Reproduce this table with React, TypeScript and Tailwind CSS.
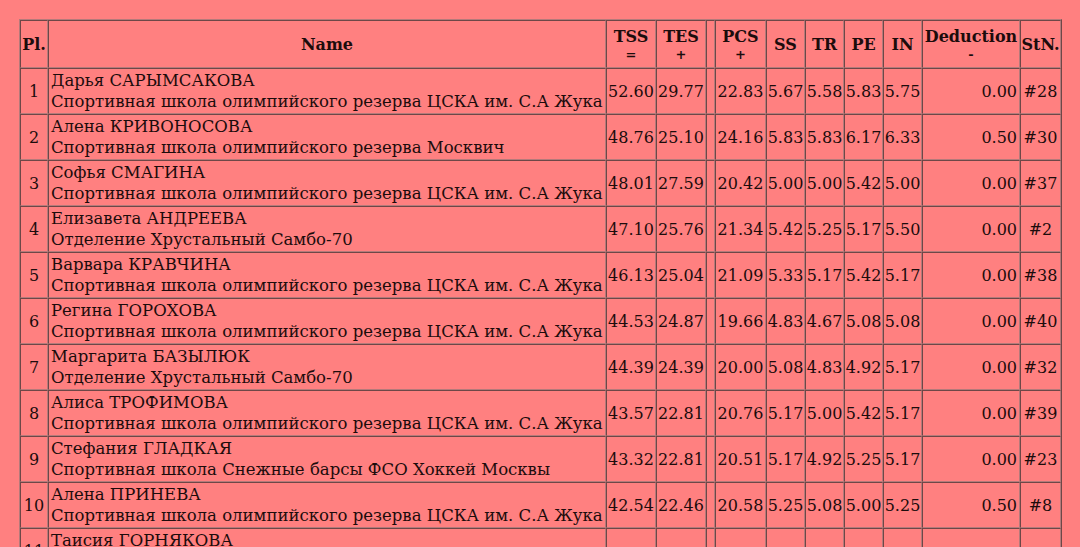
const CSKA = 'Спортивная школа олимпийского резерва ЦСКА им. С.А Жука'
const SAMBO = 'Отделение Хрустальный Самбо-70'

type Row = {
  pl: string
  name: string
  club: string
  v: string[]
}

const rows: Row[] = [
  { pl: '1', name: 'Дарья САРЫМСАКОВА', club: CSKA, v: ['52.60', '29.77', '22.83', '5.67', '5.58', '5.83', '5.75', '0.00', '#28'] },
  { pl: '2', name: 'Алена КРИВОНОСОВА', club: 'Спортивная школа олимпийского резерва Москвич', v: ['48.76', '25.10', '24.16', '5.83', '5.83', '6.17', '6.33', '0.50', '#30'] },
  { pl: '3', name: 'Софья СМАГИНА', club: CSKA, v: ['48.01', '27.59', '20.42', '5.00', '5.00', '5.42', '5.00', '0.00', '#37'] },
  { pl: '4', name: 'Елизавета АНДРЕЕВА', club: SAMBO, v: ['47.10', '25.76', '21.34', '5.42', '5.25', '5.17', '5.50', '0.00', '#2'] },
  { pl: '5', name: 'Варвара КРАВЧИНА', club: CSKA, v: ['46.13', '25.04', '21.09', '5.33', '5.17', '5.42', '5.17', '0.00', '#38'] },
  { pl: '6', name: 'Регина ГОРОХОВА', club: CSKA, v: ['44.53', '24.87', '19.66', '4.83', '4.67', '5.08', '5.08', '0.00', '#40'] },
  { pl: '7', name: 'Маргарита БАЗЫЛЮК', club: SAMBO, v: ['44.39', '24.39', '20.00', '5.08', '4.83', '4.92', '5.17', '0.00', '#32'] },
  { pl: '8', name: 'Алиса ТРОФИМОВА', club: CSKA, v: ['43.57', '22.81', '20.76', '5.17', '5.00', '5.42', '5.17', '0.00', '#39'] },
  { pl: '9', name: 'Стефания ГЛАДКАЯ', club: 'Спортивная школа Снежные барсы ФСО Хоккей Москвы', v: ['43.32', '22.81', '20.51', '5.17', '4.92', '5.25', '5.17', '0.00', '#23'] },
  { pl: '10', name: 'Алена ПРИНЕВА', club: CSKA, v: ['42.54', '22.46', '20.58', '5.25', '5.08', '5.00', '5.25', '0.50', '#8'] },
  { pl: '11', name: 'Таисия ГОРНЯКОВА', club: CSKA, v: ['', '', '', '', '', '', '', '', ''] },
]

// inset look for every cell
const cell = 'border border-t-[#6e4747] border-l-[#6e4747] border-b-[#b57a7a] border-r-[#b57a7a] py-px'
const num = `${cell} px-0 text-center whitespace-nowrap overflow-visible`

export default function App() {
  return (
    <div className="min-h-[547px] bg-[#ff8080] pt-[19px] pl-[19px] text-[#1c0c0c] font-['DejaVu_Serif',serif] text-[16px] leading-[21px]">
      <table className="w-[1043px] table-fixed border-separate border-spacing-0 border border-t-[#b57a7a] border-l-[#b57a7a] border-b-[#6e4747] border-r-[#6e4747]">
        <colgroup>
          <col className="w-[28px]" />
          <col className="w-[558px]" />
          <col className="w-[50px]" />
          <col className="w-[50px]" />
          <col className="w-[9px]" />
          <col className="w-[51px]" />
          <col className="w-[39px]" />
          <col className="w-[39px]" />
          <col className="w-[39px]" />
          <col className="w-[39px]" />
          <col className="w-[98px]" />
          <col className="w-[41px]" />
        </colgroup>
        <thead>
          <tr className="h-[48px] font-bold">
            <th className={`${cell} px-0`}>Pl.</th>
            <th className={`${cell} px-[2px]`}>Name</th>
            <th className={num}>
              <div>TSS</div>
              <div className="text-[13px] leading-[15px]">=</div>
            </th>
            <th className={num}>
              <div>TES</div>
              <div className="text-[13px] leading-[15px]">+</div>
            </th>
            <th className={`${cell} px-0`}></th>
            <th className={num}>
              <div>PCS</div>
              <div className="text-[13px] leading-[15px]">+</div>
            </th>
            <th className={num}>SS</th>
            <th className={num}>TR</th>
            <th className={num}>PE</th>
            <th className={num}>IN</th>
            <th className={num}>
              <div>Deduction</div>
              <div className="text-[13px] leading-[15px]">-</div>
            </th>
            <th className={num}>StN.</th>
          </tr>
        </thead>
        <tbody>
          {rows.map((r) => (
            <tr key={r.pl} className="h-[46px]">
              <td className={num}>{r.pl}</td>
              <td className={`${cell} px-[2px] whitespace-nowrap text-[16.5px]`}>
                <div>{r.name}</div>
                <div>{r.club}</div>
              </td>
              <td className={num}>{r.v[0]}</td>
              <td className={num}>{r.v[1]}</td>
              <td className={`${cell} px-0`}></td>
              <td className={num}>{r.v[2]}</td>
              <td className={num}>{r.v[3]}</td>
              <td className={num}>{r.v[4]}</td>
              <td className={num}>{r.v[5]}</td>
              <td className={num}>{r.v[6]}</td>
              <td className={`${cell} pl-0 pr-[2px] text-right`}>{r.v[7]}</td>
              <td className={num}>{r.v[8]}</td>
            </tr>
          ))}
        </tbody>
      </table>
    </div>
  )
}
